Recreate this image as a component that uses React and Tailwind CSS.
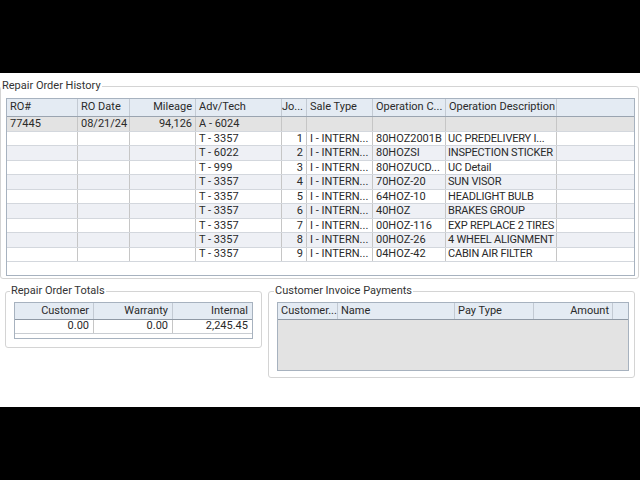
import React from 'react';

const font = { fontFamily: 'Roboto, "Liberation Sans", Arial, sans-serif' };

const historyCols = [
  { label: 'RO#', w: 'w-[71px]', align: 'left' },
  { label: 'RO Date', w: 'w-[52px]', align: 'left' },
  { label: 'Mileage', w: 'w-[66px]', align: 'right' },
  { label: 'Adv/Tech', w: 'w-[86px]', align: 'left' },
  { label: 'Jo...', w: 'w-[25px]', align: 'right' },
  { label: 'Sale Type', w: 'w-[66px]', align: 'left' },
  { label: 'Operation C...', w: 'w-[73px]', align: 'left' },
  { label: 'Operation Description', w: 'w-[111px]', align: 'left' },
  { label: '', w: 'flex-1', align: 'left' },
];

const ops = [
  ['T - 3357', '1', '80HOZ2001B', 'UC PREDELIVERY I...'],
  ['T - 6022', '2', '80HOZSI', 'INSPECTION STICKER'],
  ['T - 999', '3', '80HOZUCD...', 'UC Detail'],
  ['T - 3357', '4', '70HOZ-20', 'SUN VISOR'],
  ['T - 3357', '5', '64HOZ-10', 'HEADLIGHT BULB'],
  ['T - 3357', '6', '40HOZ', 'BRAKES GROUP'],
  ['T - 3357', '7', '00HOZ-116', 'EXP REPLACE 2 TIRES'],
  ['T - 3357', '8', '00HOZ-26', '4 WHEEL ALIGNMENT'],
  ['T - 3357', '9', '04HOZ-42', 'CABIN AIR FILTER'],
];

const rows = [
  { bg: 'bg-[#e3e3e3]', h: 'h-[15px]', cells: ['77445', '08/21/24', '94,126', 'A - 6024', '', '', '', '', ''] },
  ...ops.map((o, i) => ({
    bg: i % 2 === 1 ? 'bg-[#eef0f5]' : 'bg-white',
    h: 'h-[14.44px]',
    cells: ['', '', '', o[0], o[1], 'I - INTERN...', o[2], o[3], ''],
  })),
];

function HeaderCell({ col, last }) {
  return (
    <div
      className={`${col.w} h-full flex items-center px-[3px] overflow-hidden whitespace-nowrap ${
        last ? '' : 'border-r border-[#c3cad3]'
      } ${col.align === 'right' ? 'justify-end' : ''}`}
    >
      {col.label}
    </div>
  );
}

function Group({ title, className, legendClass, children }) {
  return (
    <fieldset className={`border border-[#d4d4d4] rounded-[3px] p-0 m-0 ${className}`}>
      <legend className={`px-[1px] text-[11px] leading-[14px] text-[#333] ${legendClass}`}>{title}</legend>
      {children}
    </fieldset>
  );
}

function HistoryTable() {
  return (
    <div className="w-[629px] h-[178px] border border-[#a7b2bf] flex flex-col bg-white">
      <div className="h-[18px] flex border-b border-[#9aa4b0] bg-[#e4ebf3]">
        {historyCols.map((c, i) => (
          <HeaderCell key={i} col={c} last={i === historyCols.length - 1} />
        ))}
      </div>
      {rows.map((r, ri) => (
        <div key={ri} className={`${r.h} flex border-b border-[#d3d7dd] ${r.bg}`}>
          {historyCols.map((c, i) => (
            <div
              key={i}
              className={`${c.w} h-full flex items-center pt-[1px] overflow-hidden whitespace-nowrap ${
                i === 7 ? 'px-[2px] tracking-[-0.2px]' : 'px-[3px]'
              } ${i === historyCols.length - 1 ? '' : 'border-r border-[#c6c6c6]'} ${
                c.align === 'right' ? 'justify-end' : ''
              }`}
            >
              {r.cells[i]}
            </div>
          ))}
        </div>
      ))}
    </div>
  );
}

function TotalsTable() {
  const cols = ['Customer', 'Warranty', 'Internal'];
  const vals = ['0.00', '0.00', '2,245.45'];
  return (
    <div className="w-[239px] h-[37px] border border-[#a7b2bf] flex flex-col bg-white">
      <div className="h-[17px] flex border-b border-[#8f99a5] bg-[#e4ebf3]">
        {cols.map((c, i) => (
          <div
            key={c}
            className={`w-[79px] h-full flex items-center justify-end px-[4px] ${
              i < 2 ? 'border-r border-[#c3cad3]' : ''
            }`}
          >
            {c}
          </div>
        ))}
      </div>
      <div className="h-[14px] flex border-b border-[#c9cdd2]">
        {vals.map((v, i) => (
          <div
            key={i}
            className={`w-[79px] h-full flex items-center justify-end px-[4px] ${
              i < 2 ? 'border-r border-[#c6c6c6]' : ''
            }`}
          >
            {v}
          </div>
        ))}
      </div>
    </div>
  );
}

function PaymentsTable() {
  const cols = [
    { label: 'Customer...', w: 'w-[60px]', align: 'left' },
    { label: 'Name', w: 'w-[117px]', align: 'left' },
    { label: 'Pay Type', w: 'w-[79px]', align: 'left' },
    { label: 'Amount', w: 'w-[79px]', align: 'right' },
    { label: '', w: 'flex-1', align: 'left' },
  ];
  return (
    <div className="w-[352px] h-[69px] border border-[#a7b2bf] flex flex-col bg-[#e3e3e3]">
      <div className="h-[17px] flex border-b border-[#8f99a5] bg-[#e4ebf3]">
        {cols.map((c, i) => (
          <HeaderCell key={i} col={c} last={i === cols.length - 1} />
        ))}
      </div>
    </div>
  );
}

export default function App() {
  return (
    <div className="w-[640px] h-[480px] bg-black flex flex-col text-[11px] text-[#2a2a2a]" style={font}>
      <div className="h-[73px] shrink-0" />
      <div className="h-[334px] shrink-0 bg-white flex flex-col">
        <Group title="Repair Order History" className="mt-[6px] w-[639px]" legendClass="ml-0">
          <div className="pl-[5px] pr-[3px] pt-[5px] pb-[2px]">
            <HistoryTable />
          </div>
        </Group>
        <div className="flex items-start mt-[5px]">
          <Group title="Repair Order Totals" className="ml-[5px] w-[257px]" legendClass="ml-[4px]">
            <div className="pl-[8px] pt-[4px] pb-[8px]">
              <TotalsTable />
            </div>
          </Group>
          <Group title="Customer Invoice Payments" className="ml-[6px] w-[367px]" legendClass="ml-[5px]">
            <div className="pl-[8px] pt-[4px] pb-[6px]">
              <PaymentsTable />
            </div>
          </Group>
        </div>
      </div>
    </div>
  );
}
